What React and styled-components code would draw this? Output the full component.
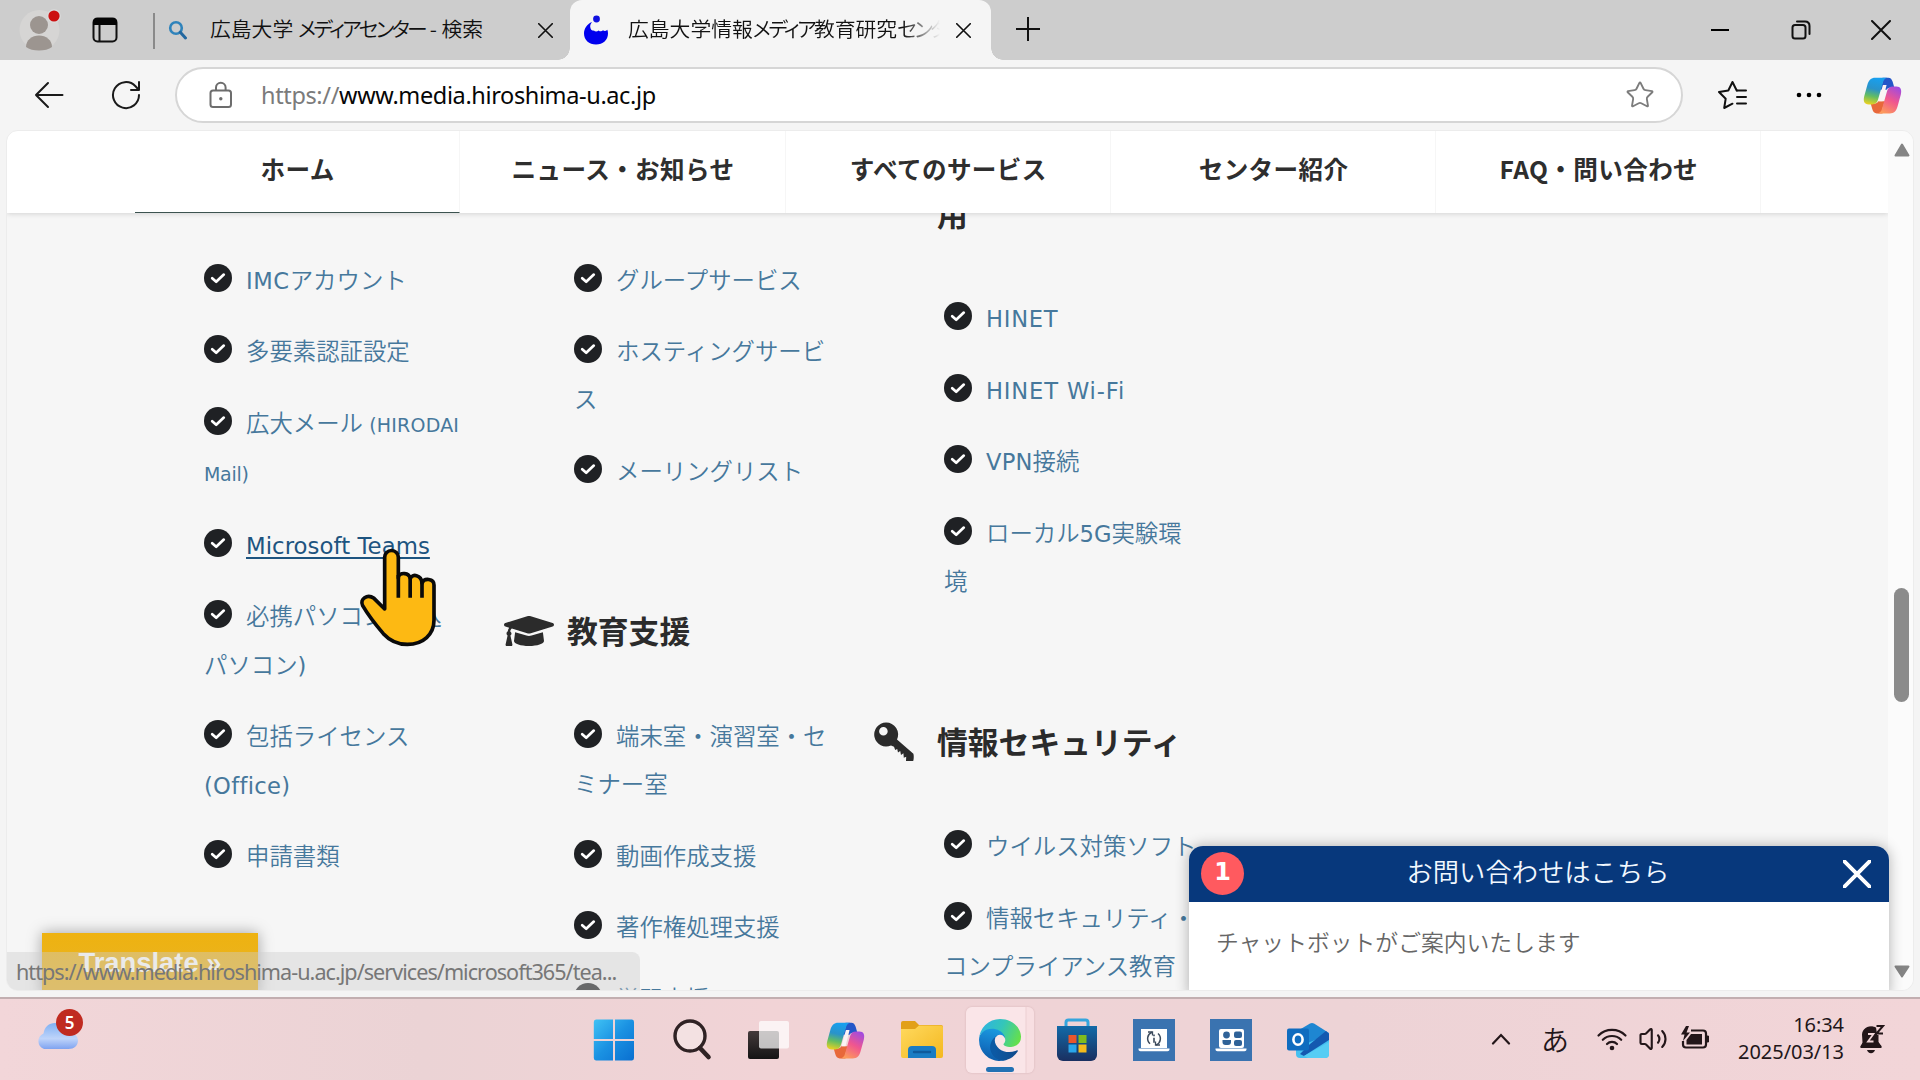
import React from "react";
import styled, { createGlobalStyle, css } from "styled-components";
import { FaGraduationCap } from "react-icons/fa";
import { Star, Volume2 } from "lucide-react";

const JP = `"Noto Sans CJK JP", sans-serif`;
const UI = `"Noto Sans", "Noto Sans CJK JP", sans-serif`;

const GlobalStyle = createGlobalStyle`
  *, *::before, *::after { box-sizing: border-box; }
  body { margin: 0; overflow: hidden; background: #f5f5f5; font-family: ${JP}; }
  svg { display: block; flex: none; }
  ul { list-style: none; margin: 0; padding: 0; }
`;

const Screen = styled.div`
  position: relative;
  width: 1920px;
  height: 1080px;
  overflow: hidden;
  display: flex;
  flex-direction: column;
`;

/* ---------- tab strip ---------- */
const TabStrip = styled.header`
  height: 60px;
  flex: none;
  display: flex;
  background: #cdcdcd;
  color: #111;
`;
const ProfileArea = styled.div`
  width: 153px;
  display: flex;
  align-items: center;
  padding: 0 0 0 18px;
  gap: 30px;
`;
const Divider = styled.i`
  width: 2px;
  height: 36px;
  margin: 13px 13px 0 0;
  background: #8a8a8a;
`;
const Tab = styled.div`
  display: flex;
  align-items: center;
  height: 60px;
  width: ${(p) => p.$w}px;
  padding-left: ${(p) => p.$pad}px;
  ${(p) =>
    p.$active &&
    css`
      position: relative;
      background: #f5f5f5;
      border-radius: 12px 12px 0 0;
      &::before,
      &::after {
        content: "";
        position: absolute;
        bottom: 0;
        width: 12px;
        height: 12px;
      }
      &::before {
        left: -12px;
        background: radial-gradient(circle at 0 0, #cdcdcd 11.5px, #f5f5f5 12px);
      }
      &::after {
        right: -12px;
        background: radial-gradient(circle at 100% 0, #cdcdcd 11.5px, #f5f5f5 12px);
      }
    `}
`;
const TabTitle = styled.span`
  width: ${(p) => p.$w}px;
  margin: 0 ${(p) => p.$mr}px 4px ${(p) => p.$ml}px;
  overflow: hidden;
  white-space: nowrap;
  font: 350 20.8px/30px ${JP};
  ${(p) => p.$fade && css`mask-image: linear-gradient(90deg, #000 88%, transparent);`}
`;
const Kana = styled.span`
  font-feature-settings: "palt";
  letter-spacing: ${(p) => p.$ls}px;
`;
const WindowButtons = styled.div`
  margin-left: auto;
  padding-right: 29px;
  display: flex;
  align-items: center;
  gap: 60.5px;
`;
const NewTab = styled.div`
  display: flex;
  align-items: center;
  padding: 0 0 2px 25px;
`;

/* ---------- toolbar ---------- */
const Toolbar = styled.div`
  height: 70px;
  flex: none;
  display: flex;
  align-items: center;
  padding: 0 18px 0 34px;
  background: #f5f5f5;
`;
const NavButtons = styled.div`
  width: 141px;
  display: flex;
  align-items: center;
  gap: 47px;
`;
const AddressBar = styled.div`
  width: 1508px;
  height: 56px;
  display: flex;
  align-items: center;
  padding: 0 26px 0 32px;
  border: 2px solid #d6d6d6;
  border-radius: 28px;
  background: #fff;
`;
const Url = styled.span`
  flex: 1;
  margin: 0 0 1px 28px;
  font: 400 23.5px/34px ${UI};
  letter-spacing: ${(p) => p.$ls}px;
  color: #060606;
  white-space: nowrap;
`;
const Scheme = styled.span`
  color: #7b7b7b;
`;
const ToolIcons = styled.div`
  margin-left: auto;
  display: flex;
  align-items: center;
`;
const Slot = styled.div`
  width: ${(p) => p.$w}px;
  flex: none;
  display: flex;
`;

/* ---------- page ---------- */
const Frame = styled.div`
  height: 867px;
  flex: none;
  padding: 0 6px 6px 6px;
  background: #f4f4f4;
`;
const Page = styled.main`
  position: relative;
  height: 861px;
  display: flex;
  overflow: hidden;
  border: 1px solid #ececec;
  border-radius: 12px;
  background: #f6f6f6;
`;
const Site = styled.div`
  width: 1881px;
  flex: none;
  display: flex;
  flex-direction: column;
  overflow: hidden;
`;
const SiteNav = styled.nav`
  position: relative;
  z-index: 1;
  height: 82px;
  flex: none;
  display: flex;
  padding-left: 128px;
  background: #fff;
  box-shadow: 0 1px 5px rgba(0, 0, 0, 0.14);
`;
const NavItem = styled.a`
  width: 325.3px;
  height: 82px;
  padding: 18px 0 0 1px;
  text-align: center;
  border-right: 1px solid #f6f6f6;
  border-bottom: ${(p) => (p.$active ? "1.5px solid #3c5350" : "none")};
  color: #2e2e2e;
  font: 700 24.6px/38px ${JP};
  letter-spacing: 0.35px;
`;
const Columns = styled.section`
  flex: 1;
  min-height: 0;
  display: flex;
  padding-left: 197px;
  overflow: hidden;
`;
const Column = styled.div`
  width: 370px;
  flex: none;
  padding-top: ${(p) => p.$top}px;
`;
const Heading = styled.h3`
  display: flex;
  align-items: center;
  height: 48px;
  margin: ${(p) => p.$mt}px 0 58px -70px;
  color: #2b2b2b;
  font: 700 30.8px/48px ${JP};
  white-space: nowrap;
`;
const HeadingIcon = styled.span`
  width: ${(p) => p.$w}px;
  padding-top: 2px;
  display: flex;
`;
const List = styled.ul`
  display: flex;
  flex-direction: column;
  gap: 23.3px;
`;
const Item = styled.li`
  display: flex;
  color: #46789c;
  font: 350 23.4px/48.3px ${JP};
  white-space: nowrap;
`;
const ItemIcon = styled.span`
  width: 42px;
  height: 43px;
  display: flex;
  align-items: center;
`;
const ItemText = styled.div`
  margin: -1.5px 0 1.5px;
`;
const Rest = styled.div`
  margin-left: -42px;
  ${(p) => p.$small && css`line-height: 50.6px;`}
`;
const Latin = styled.span`
  font-family: "DejaVu Sans", sans-serif;
  font-weight: 400;
  font-size: ${(p) => p.$size || 22.6}px;
  letter-spacing: ${(p) => p.$ls || 0}px;
  line-height: 0;
`;
const Hovered = styled.a`
  color: #1d5480;
  font-family: "DejaVu Sans", sans-serif;
  font-weight: 400;
  font-size: 22.8px;
  letter-spacing: 0.05px;
  line-height: 0;
  text-decoration: underline;
  text-decoration-thickness: 2px;
  text-underline-offset: 3px;
`;
const Scrollbar = styled.div`
  width: 25px;
  display: flex;
  flex-direction: column;
  align-items: center;
  padding: 12px 0 12px 2px;
  background: #fbfbfb;
`;
const Thumb = styled.div`
  width: 15px;
  height: 114px;
  margin: 431px 0 auto;
  border-radius: 8px;
  background: #8b8b8b;
`;

/* ---------- overlays ---------- */
const Translate = styled.button`
  position: absolute;
  left: 35px;
  top: 802px;
  width: 216px;
  height: 62px;
  padding: 0 0 2px;
  border: 0;
  background: linear-gradient(#eeb210, #e8b42a);
  box-shadow: 0 0 14px rgba(0, 0, 0, 0.35);
  color: #fff;
  font: 700 27.4px/58px "Liberation Sans", Arial, sans-serif;
`;
const StatusBubble = styled.div`
  position: absolute;
  left: 0;
  top: 821px;
  width: 633px;
  height: 40px;
  padding: 3px 0 0 9px;
  border-radius: 0 8px 0 0;
  background: rgba(205, 205, 205, 0.42);
  color: #777;
  font: 400 21.6px/34px ${UI};
  letter-spacing: ${(p) => p.$ls}px;
  white-space: nowrap;
`;
const Chat = styled.aside`
  position: absolute;
  z-index: 2;
  left: 1182px;
  top: 715px;
  width: 700px;
  height: 150px;
  border-radius: 14px 14px 0 0;
  background: #fff;
  box-shadow: 0 0 14px rgba(0, 0, 0, 0.3);
`;
const ChatHead = styled.div`
  height: 56px;
  display: flex;
  align-items: center;
  justify-content: space-between;
  padding: 0 18px 0 12px;
  border-radius: 14px 14px 0 0;
  background: #07387c;
  color: #f2f8ff;
  font: 350 26.3px/50px ${JP};
`;
const ChatTitle = styled.span`
  margin: -6px 11px 0 0;
`;
const Unread = styled.span`
  width: 43px;
  height: 43px;
  margin-top: -2px;
  border-radius: 50%;
  background: #ff5a5f;
  color: #fff;
  text-align: center;
  font: 700 24px/41px "DejaVu Sans", sans-serif;
`;
const ChatBody = styled.div`
  padding: 19px 0 0 27px;
  color: #666;
  font: 350 22.8px/42px ${JP};
`;
const Pointer = styled.svg`
  position: absolute;
  z-index: 3;
  left: 358px;
  top: 547px;
`;

/* ---------- taskbar ---------- */
const Taskbar = styled.footer`
  position: relative;
  flex: 1;
  display: flex;
  border-top: 2px solid #c2aeb0;
  background: linear-gradient(90deg, #f2d6d9, #ebd3d5 22%, #f1d3d6 40%, #edd3d6 70%, #f2d5d8);
  color: #231619;
`;
const Weather = styled.div`
  position: relative;
  width: 575px;
  flex: none;
  padding: 21px 0 0 34px;
`;
const WeatherBadge = styled.span`
  position: absolute;
  left: 56px;
  top: 10px;
  width: 27px;
  height: 27px;
  border-radius: 50%;
  background: #c02a20;
  color: #fff;
  text-align: center;
  font: 600 17px/27px ${UI};
`;
const Apps = styled.div`
  display: flex;
  align-items: center;
  padding-bottom: 4px;
`;
const App_ = styled.div`
  width: 77.2px;
  height: 82px;
  display: flex;
  align-items: center;
  justify-content: center;
`;
const ActiveApp = styled.div`
  width: 68px;
  height: 66px;
  display: flex;
  flex-direction: column;
  align-items: center;
  padding-top: 12px;
  gap: 6px;
  border-radius: 6px;
  background: linear-gradient(90deg, #fae5e8 59px, #eccfd2 60px, #f8dfe2 61px);
  box-shadow: 0 0 2px rgba(140, 90, 95, 0.3);
  &::after {
    content: "";
    width: 28px;
    height: 5px;
    border-radius: 3px;
    background: #2272b4;
  }
`;
const Tray = styled.div`
  margin-left: auto;
  padding: 0 35px 6px 0;
  display: flex;
  align-items: center;
`;
const Ime = styled.span`
  width: 85px;
  flex: none;
  padding-left: 30px;
  font: 350 28px/38px ${JP};
`;
const Clock = styled.div`
  width: 149px;
  padding: 0 15px 2px 0;
  text-align: right;
  font: 400 20px/27.500px ${UI};
  letter-spacing: -0.05px;
`;

const CheckIcon = () => (
  <svg width="28" height="28" viewBox="0 0 28 28">
    <circle cx="14" cy="14" r="14" fill="#1f2124" />
    <path d="M8.2 14.2l4 3.6 7.6-7.2" fill="none" stroke="#fff" strokeWidth="2.7" strokeLinecap="round" strokeLinejoin="round" />
  </svg>
);

const KeyIcon = () => (
  <svg width="40" height="40" viewBox="0 0 40 40">
    <path
      fillRule="evenodd"
      fill="#2b2b2b"
      d="M12 0.5a12 12 0 1 0 5 23l3 1.2 1.2 3.2 2-1 .8 3.6 2.2-1.4.8 4 2.4-1.8.4 4.4 2.4-1-.2 4.4h7.2c.6-2 .8-5 .2-7.4L23 17.6A12 12 0 0 0 12 .5zM9.4 5a4.3 4.3 0 1 1 0 8.6 4.3 4.3 0 0 1 0-8.6z"
    />
  </svg>
);

const Cross = ({ size, stroke = 2, color = "#111" }) => (
  <svg width={size} height={size} viewBox="0 0 20 20">
    <path d="M1 1l18 18M19 1L1 19" stroke={color} strokeWidth={stroke} strokeLinecap="round" />
  </svg>
);

const CopilotIcon = ({ size, id }) => (
  <svg width={size} height={size} viewBox="0 0 48 48">
    <defs>
      <linearGradient id={id + "a"} x1="0.4" y1="0" x2="0.2" y2="1">
        <stop offset="0" stopColor="#189fee" />
        <stop offset="0.4" stopColor="#2a93c9" />
        <stop offset="0.68" stopColor="#63bd62" />
        <stop offset="1" stopColor="#eed21f" />
      </linearGradient>
      <linearGradient id={id + "b"} x1="0.8" y1="0" x2="0.3" y2="1">
        <stop offset="0" stopColor="#a04be0" />
        <stop offset="0.5" stopColor="#f0568f" />
        <stop offset="1" stopColor="#fd9a5b" />
      </linearGradient>
    </defs>
    <path d="M24 2h7c3 0 4.600 2 5.500 5l2 7h-3.500c-3 0-5 1-6 3L21 17l3-9z" fill="#2456c8" />
    <path d="M24 46h-7c-3 0-4.600-2-5.500-5l-2-7h3.500c3 0 5-1 6-3l8 0-3 9z" fill="#e8683a" />
    <path d="M19.500 29l5-18h4.500l-5 20h-4.500z" fill="#fbf3f4" />
    <path d="M15 2h15c-3 .5-4.500 2.500-5.500 6l-6 21c-1 4-3.500 6-7.500 6H7C1.500 35 0 31 1.500 25L5.500 10.500C7 5 10 2 15 2z" fill={`url(#${id}a)`} />
    <path d="M33 46H18c3-.5 4.500-2.500 5.500-6l6-21c1-4 3.500-6 7.500-6h4c5.500 0 7 4 5.500 10l-4 14.500C41 43 38 46 33 46z" fill={`url(#${id}b)`} />
  </svg>
);

const EdgeIcon = () => (
  <svg width="42" height="42" viewBox="0 0 256 256">
    <defs>
      <linearGradient id="e1" x1="0.2" y1="0.7" x2="1" y2="0.7">
        <stop offset="0" stopColor="#0c59a4" />
        <stop offset="1" stopColor="#114a8b" />
      </linearGradient>
      <linearGradient id="e2" x1="0.6" y1="0" x2="0.4" y2="1">
        <stop offset="0" stopColor="#1b9de2" />
        <stop offset="0.6" stopColor="#1374c4" />
        <stop offset="1" stopColor="#0c5aa6" />
      </linearGradient>
      <linearGradient id="e3" x1="0" y1="0.3" x2="1" y2="0.6">
        <stop offset="0" stopColor="#2fb3e2" />
        <stop offset="0.5" stopColor="#34c6b9" />
        <stop offset="1" stopColor="#66e04a" />
      </linearGradient>
    </defs>
    <path fill="url(#e1)" d="M231.070 190.550a93.310 93.310 0 0 1-10.540 4.710 101.890 101.890 0 0 1-35.900 6.460c-47.320 0-88.540-32.550-88.540-74.320A31.500 31.500 0 0 1 112.540 100c-42.800 1.800-53.800 46.400-53.800 72.530 0 73.890 68.100 81.380 82.770 81.380 7.910 0 19.840-2.300 27-4.560l1.310-.44a128.340 128.340 0 0 0 66.600-52.800 4 4 0 0 0-5.350-5.560z" />
    <path fill="url(#e2)" d="M105.730 241.420a79.200 79.200 0 0 1-22.740-21.340 80.720 80.720 0 0 1 29.530-120c3.120-1.470 8.450-4.130 15.540-4a32.350 32.350 0 0 1 25.690 13 31.880 31.880 0 0 1 6.360 18.660c0-.21 24.460-79.600-80-79.600-43.900 0-80 41.660-80 78.210a130.150 130.150 0 0 0 12.110 56 128 128 0 0 0 156.380 67.110 75.550 75.550 0 0 1-62.870-8z" />
    <path fill="url(#e3)" d="M152.330 148.860c-.81 1.050-3.300 2.500-3.300 5.660 0 2.610 1.700 5.120 4.720 7.230 14.380 10 41.490 8.680 41.560 8.680a59.560 59.560 0 0 0 30.270-8.350A61.380 61.380 0 0 0 256 109.180c.26-22.410-8-37.310-11.340-43.910C223.460 23.840 177.720 0 128 0A128 128 0 0 0 0 126.200c.48-36.540 36.800-66.050 80-66.050 3.500 0 23.460.34 42 10.070 16.340 8.580 24.900 18.940 30.850 29.210 6.180 10.670 7.280 24.150 7.280 29.520s-2.740 13.330-7.800 19.910z" />
  </svg>
);

const Bullet = ({ children }) => (
  <Item>
    <ItemIcon><CheckIcon /></ItemIcon>
    <ItemText>{children}</ItemText>
  </Item>
);

const Laptop = ({ children }) => (
  <svg width="42" height="42" viewBox="0 0 42 42">
    <rect width="42" height="42" fill="#3a73b0" />
    {children}
    <path d="M5.500 29.500h31v.8c0 1.200-.8 2-2 2h-27c-1.200 0-2-.8-2-2z" fill="#fff" />
  </svg>
);

export default function App() {
  return (
    <Screen>
      <GlobalStyle />
      <TabStrip>
        <ProfileArea>
          <svg width="44" height="44" viewBox="0 0 44 44">
            <circle cx="21.500" cy="22" r="20" fill="#d6d5d4" />
            <circle cx="21" cy="17" r="9" fill="#9c9590" />
            <path d="M8 39c0-7 6-11.500 13-11.500S34 32 34 39c-3 2.500-8 3.500-13 3.500S11 41.500 8 39z" fill="#9c9590" />
            <circle cx="36" cy="8" r="6.800" fill="#dcdcdc" />
            <circle cx="36" cy="8" r="5.600" fill="#cc1111" />
          </svg>
          <svg width="26" height="26" viewBox="0 0 26 26">
            <rect x="1.500" y="1.500" width="23" height="23" rx="4" fill="none" stroke="#111" strokeWidth="2" />
            <path d="M1 8V5a4 4 0 0 1 4-4h16a4 4 0 0 1 4 4v3z" fill="#050505" />
            <path d="M7.500 8v16" stroke="#111" strokeWidth="2" />
          </svg>
        </ProfileArea>
        <Divider />
        <Tab $w={402} $pad={0}>
          <svg width="20" height="20" viewBox="0 0 20 20">
            <circle cx="8" cy="8" r="5.800" fill="none" stroke="#2f83bb" strokeWidth="2.600" />
            <path d="M12.300 12.300L17.500 18" stroke="#2368a0" strokeWidth="3" strokeLinecap="round" />
          </svg>
          <TabTitle $w={290} $ml={22} $mr={38}>
            広島大学 <Kana $ls={-2.6}>メディアセンター</Kana> - 検索
          </TabTitle>
          <Cross size={15} stroke={2.2} />
        </Tab>
        <Tab $active $w={421} $pad={14}>
          <svg width="24" height="30" viewBox="0 0 24 30">
            <circle cx="12.500" cy="4" r="3.400" fill="#1010e0" />
            <path d="M8 7C3 9 0 13.500 0 18.500 0 25 5 29.500 12 29.500S24 25 24 18.500c0-1.300-.2-2.600-.7-3.800-1.500 1.600-3 1.600-4.300.6-1.200 1.400-3 1.400-4.400.1-1.500 1.500-3.600 1.300-4.700.2C7.500 16 6.300 14 6.200 11.500 6.200 10 6.800 8.500 8 7z" fill="#0000ee" />
          </svg>
          <TabTitle $fade $w={312} $ml={20} $mr={16}>
            広島大学情報<Kana $ls={-2.6}>メディア</Kana>教育研究<Kana $ls={-2.6}>センター</Kana>
          </TabTitle>
          <Cross size={15} stroke={2.2} />
        </Tab>
        <NewTab>
          <svg width="24" height="24" viewBox="0 0 24 24">
            <path d="M12 0v24M0 12h24" stroke="#111" strokeWidth="2" />
          </svg>
        </NewTab>
        <WindowButtons>
          <svg width="20" height="20" viewBox="0 0 20 20">
            <path d="M1 10h18" stroke="#000" strokeWidth="2" />
          </svg>
          <svg width="20" height="20" viewBox="0 0 20 20">
            <rect x="1.500" y="5" width="13" height="13.500" rx="2.500" fill="none" stroke="#111" strokeWidth="2" />
            <path d="M6 1.500h8c3 0 4.500 1.500 4.500 4.500v8" fill="none" stroke="#111" strokeWidth="2" strokeLinecap="round" />
          </svg>
          <Cross size={20} stroke={2} />
        </WindowButtons>
      </TabStrip>

      <Toolbar>
        <NavButtons>
          <svg width="30" height="28" viewBox="0 0 30 28">
            <path d="M28.500 14H2M14 2L2 14l12 12" fill="none" stroke="#1a1a1a" strokeWidth="2" strokeLinecap="round" strokeLinejoin="round" />
          </svg>
          <svg width="30" height="30" viewBox="0 0 30 30">
            <path d="M28 15A13 13 0 1 1 24.500 6.200L27.500 9.500M28 2v8h-8" fill="none" stroke="#1a1a1a" strokeWidth="2" strokeLinecap="round" strokeLinejoin="round" />
          </svg>
        </NavButtons>
        <AddressBar>
          <svg width="24" height="28" viewBox="0 0 24 28">
            <rect x="1.500" y="9.500" width="20.500" height="16.500" rx="2.500" fill="none" stroke="#6d6d6d" strokeWidth="2" />
            <path d="M7 9.500V6.500a4.800 4.800 0 0 1 9.600 0v3" fill="none" stroke="#6d6d6d" strokeWidth="2" />
            <circle cx="11.800" cy="17.700" r="1.700" fill="#6d6d6d" />
          </svg>
          <Url $ls={-0.37}><Scheme>https://</Scheme>www.media.hiroshima-u.ac.jp</Url>
          <Star size={30} strokeWidth={1.500} color="#7c7c7c" />
        </AddressBar>
        <ToolIcons>
          <Slot $w={79}>
            <svg width="32" height="30" viewBox="0 0 32 30">
              <path d="M20 10.500h-.3L15.500 2 11.300 10.500 2 12l6.700 6.700L7.200 28l8.300-4.300" fill="none" stroke="#111" strokeWidth="2" strokeLinejoin="round" strokeLinecap="round" />
              <path d="M20 10.500h9M20 17h9M20 23.500h9" stroke="#111" strokeWidth="2" strokeLinecap="round" />
            </svg>
          </Slot>
          <Slot $w={67}>
            <svg width="26" height="6" viewBox="0 0 26 6">
              <circle cx="3" cy="3" r="2.300" /><circle cx="13" cy="3" r="2.300" /><circle cx="23" cy="3" r="2.300" />
            </svg>
          </Slot>
          <CopilotIcon size={39} id="ct" />
        </ToolIcons>
      </Toolbar>

      <Frame>
        <Page>
          <Site>
            <SiteNav>
              <NavItem $active>ホーム</NavItem>
              <NavItem>ニュース・お知らせ</NavItem>
              <NavItem>すべてのサービス</NavItem>
              <NavItem>センター紹介</NavItem>
              <NavItem>FAQ・問い合わせ</NavItem>
            </SiteNav>
            <Columns>
              <Column $top={43}>
                <List>
                  <Bullet><Latin $ls={0.6}>IMC</Latin>アカウント</Bullet>
                  <Bullet>多要素認証設定</Bullet>
                  <Bullet>
                    広大メール<Latin $size={19} $ls={0.2}> (HIRODAI</Latin>
                    <Rest $small><Latin $size={19} $ls={-0.3}>Mail)</Latin></Rest>
                  </Bullet>
                  <Bullet><Hovered>Microsoft Teams</Hovered></Bullet>
                  <Bullet>
                    必携パソコン<Latin>(</Latin>持込
                    <Rest>パソコン<Latin>)</Latin></Rest>
                  </Bullet>
                  <Bullet>
                    包括ライセンス
                    <Rest><Latin $ls={0.3}>(Office)</Latin></Rest>
                  </Bullet>
                  <Bullet>申請書類</Bullet>
                </List>
              </Column>
              <Column $top={43}>
                <List>
                  <Bullet>グループサービス</Bullet>
                  <Bullet>
                    ホスティングサービ
                    <Rest>ス</Rest>
                  </Bullet>
                  <Bullet>メーリングリスト</Bullet>
                </List>
                <Heading $mt={110.5}>
                  <HeadingIcon $w={63}><FaGraduationCap size={50} /></HeadingIcon>
                  教育支援
                </Heading>
                <List>
                  <Bullet>
                    端末室・演習室・セ
                    <Rest>ミナー室</Rest>
                  </Bullet>
                  <Bullet>動画作成支援</Bullet>
                  <Bullet>著作権処理支援</Bullet>
                  <Bullet>学習支援</Bullet>
                </List>
              </Column>
              <Column $top={0}>
                <Heading $mt={-24.5}>
                  <HeadingIcon $w={63} />
                  用
                </Heading>
                <List>
                  <Bullet><Latin $ls={0.75}>HINET</Latin></Bullet>
                  <Bullet><Latin $ls={0.85}>HINET Wi-Fi</Latin></Bullet>
                  <Bullet><Latin $ls={0.2}>VPN</Latin>接続</Bullet>
                  <Bullet>
                    ローカル<Latin>5G</Latin>実験環
                    <Rest>境</Rest>
                  </Bullet>
                </List>
                <Heading $mt={111}>
                  <HeadingIcon $w={63}><KeyIcon /></HeadingIcon>
                  情報セキュリティ
                </Heading>
                <List>
                  <Bullet>ウイルス対策ソフト</Bullet>
                  <Bullet>
                    情報セキュリティ・
                    <Rest>コンプライアンス教育</Rest>
                  </Bullet>
                </List>
              </Column>
            </Columns>
          </Site>
          <Scrollbar>
            <svg width="16" height="14" viewBox="0 0 16 14">
              <path d="M8 1.500L14.500 12.500H1.500z" fill="#858585" stroke="#858585" strokeWidth="2" strokeLinejoin="round" />
            </svg>
            <Thumb />
            <svg width="16" height="13" viewBox="0 0 16 13">
              <path d="M8 11.500L14.500 1.500H1.500z" fill="#858585" stroke="#858585" strokeWidth="2" strokeLinejoin="round" />
            </svg>
          </Scrollbar>
          <Translate>Translate »</Translate>
          <StatusBubble $ls={-0.97}>https://www.media.hiroshima-u.ac.jp/services/microsoft365/tea...</StatusBubble>
          <Chat>
            <ChatHead>
              <Unread>1</Unread>
              <ChatTitle>お問い合わせはこちら</ChatTitle>
              <Cross size={28} stroke={2.800} color="#fff" />
            </ChatHead>
            <ChatBody>チャットボットがご案内いたします</ChatBody>
          </Chat>
        </Page>
      </Frame>

      <Taskbar>
        <Weather>
          <svg width="46" height="30" viewBox="0 0 46 30">
            <defs>
              <linearGradient id="cl" x1="0" y1="0" x2="0" y2="1">
                <stop offset="0" stopColor="#7fb0f3" /><stop offset="0.6" stopColor="#bfd4fa" /><stop offset="1" stopColor="#7fa3f0" />
              </linearGradient>
            </defs>
            <path d="M10 29a9 8.500 0 0 1-.5-15.500C10.500 7 15 3 21 3s10.500 4 11.500 9.500C39 12 44 15.500 44 20.500S40 29 34.500 29z" fill="url(#cl)" />
          </svg>
          <WeatherBadge>5</WeatherBadge>
        </Weather>
        <Apps>
          <App_>
            <svg width="42" height="42" viewBox="0 0 42 42">
              <defs>
                <linearGradient id="wn" x1="0" y1="0" x2="1" y2="1"><stop offset="0" stopColor="#3fc2f5" /><stop offset="0.5" stopColor="#1a91e2" /><stop offset="1" stopColor="#0a6fd0" /></linearGradient>
              </defs>
              <path d="M3 .5h17v19.500H.8V3A2.500 2.500 0 0 1 3 .5zM22 .5h17A2.500 2.500 0 0 1 41 3v17H22zM.8 22H20v19.500H3A2.500 2.500 0 0 1 .8 39zM22 22h19v17a2.500 2.500 0 0 1-2 2.500H22z" fill="url(#wn)" />
            </svg>
          </App_>
          <App_>
            <svg width="42" height="42" viewBox="0 0 42 42">
              <circle cx="20" cy="17" r="15" fill="#f3e1e2" stroke="#2f2224" strokeWidth="3.400" />
              <path d="M30 29l8.500 9" stroke="#2f2224" strokeWidth="4.600" strokeLinecap="round" />
            </svg>
          </App_>
          <App_>
            <svg width="44" height="40" viewBox="0 0 44 40">
              <defs>
                <linearGradient id="tv" x1="0" y1="0" x2="0" y2="1"><stop offset="0" stopColor="#443a3b" /><stop offset="1" stopColor="#151314" /></linearGradient>
              </defs>
              <rect x="2" y="11" width="31" height="28" rx="2" fill="url(#tv)" />
              <rect x="13" y="1" width="30" height="27.500" rx="2" fill="#fff" fillOpacity="0.720" />
            </svg>
          </App_>
          <App_><CopilotIcon size={39} id="cb" /></App_>
          <App_>
            <svg width="44" height="40" viewBox="0 0 44 40">
              <defs>
                <linearGradient id="fd" x1="0" y1="0" x2="1" y2="1"><stop offset="0" stopColor="#ffd95e" /><stop offset="1" stopColor="#f4b820" /></linearGradient>
              </defs>
              <path d="M1 3a2 2 0 0 1 2-2h12l4 4h22a2 2 0 0 1 2 2v6H1z" fill="#e2a019" />
              <path d="M1 9h14l4-3.500h22a2 2 0 0 1 2 2V36a2 2 0 0 1-2 2H3a2 2 0 0 1-2-2z" fill="url(#fd)" />
              <path d="M8 38V30a4 4 0 0 1 4-4h20a4 4 0 0 1 4 4v8z" fill="#1a7cc4" />
              <path d="M14 32h16" stroke="#0f5a9c" strokeWidth="2.400" strokeLinecap="round" />
            </svg>
          </App_>
          <App_><ActiveApp><EdgeIcon /></ActiveApp></App_>
          <App_>
            <svg width="42" height="44" viewBox="0 0 42 44">
              <defs>
                <linearGradient id="st" x1="0" y1="0" x2="0" y2="1"><stop offset="0" stopColor="#126aa8" /><stop offset="1" stopColor="#1a2f60" /></linearGradient>
              </defs>
              <path d="M10 9V4.500A2.500 2.500 0 0 1 12.500 2h17A2.500 2.500 0 0 1 32 4.500V9" fill="none" stroke="#35a5dd" strokeWidth="3" />
              <path d="M1 8h40v29a6 6 0 0 1-6 6H7a6 6 0 0 1-6-6z" fill="url(#st)" />
              <path d="M12.500 17h8v8h-8z" fill="#e8562c" /><path d="M22.500 17h8v8h-8z" fill="#80bc1e" />
              <path d="M12.500 26.500h8v8h-8z" fill="#2aa6ea" /><path d="M22.500 26.500h8v8h-8z" fill="#f5bb1c" />
            </svg>
          </App_>
          <App_>
            <Laptop>
              <rect x="8" y="10" width="26" height="19" fill="#fff" />
              <path d="M19 13.200a6.800 6.800 0 0 0-2 11.500M23 26a6.800 6.800 0 0 0 2-11.500" fill="none" stroke="#3b4a5c" strokeWidth="1.500" />
              <path d="M15 13h4.500v3.500M27 26h-4.500v-3.500" fill="none" stroke="#3b4a5c" strokeWidth="1.300" />
              <path d="M21 15.500v1.800M21 18.800v5" stroke="#3b4a5c" strokeWidth="1.600" />
            </Laptop>
          </App_>
          <App_>
            <Laptop>
              <rect x="9" y="10" width="25" height="19" rx="2" fill="#fff" />
              <path d="M12.500 21h8.500v2a3 3 0 0 1-3 3h-2.500a3 3 0 0 1-3-3z" fill="#2f6298" />
              <circle cx="16.500" cy="16" r="3.400" fill="#2f6298" />
              <rect x="24" y="12.500" width="8" height="6.500" rx="2" fill="#2f6298" />
              <rect x="24" y="21" width="8" height="6" rx="2" fill="#2f6298" />
            </Laptop>
          </App_>
          <App_>
            <svg width="44" height="40" viewBox="0 0 44 40">
              <path d="M8 13L24 3.500a4 4 0 0 1 4 0L43 13v8L20 33 8 28z" fill="#1e86d2" />
              <path d="M43 14v20a4 4 0 0 1-4 4H14a4 4 0 0 1-4-4V28z" fill="#45c0f0" />
              <path d="M24 24l16-13 3 3v6L18 36l-4-2z" fill="#1459b0" />
              <path d="M18 36l25-14v12a4 4 0 0 1-4 4H22z" fill="#56cdf4" />
              <rect x="1" y="8.500" width="22" height="22" rx="2" fill="#0f6cbf" />
              <ellipse cx="12" cy="19.500" rx="4.600" ry="5.300" fill="none" stroke="#fff" strokeWidth="2.600" />
            </svg>
          </App_>
        </Apps>
        <Tray>
          <svg width="20" height="12" viewBox="0 0 20 12">
            <path d="M2 10.500L10 2l8 8.500" fill="none" stroke="#231619" strokeWidth="2.200" strokeLinecap="round" />
          </svg>
          <Ime>あ</Ime>
          <Slot $w={42}><svg width="32" height="26" viewBox="0 0 32 26"><g fill="none" stroke="#231619" strokeWidth="2.200" strokeLinecap="round"><path d="M2.500 9.500a19 19 0 0 1 27 0M6.800 13.800a13 13 0 0 1 18.400 0M11 18a7 7 0 0 1 10 0" /></g><circle cx="16" cy="22" r="2.300" fill="#231619" /></svg></Slot>
          <Slot $w={42}><Volume2 size={30} strokeWidth={1.700} color="#231619" /></Slot>
          <Slot $w={30}>
            <svg width="30" height="26" viewBox="0 0 30 26">
              <path d="M11 4.500h12a3 3 0 0 1 3 3v11a3 3 0 0 1-3 3H6a3 3 0 0 1-3-3V15" fill="none" stroke="#231619" strokeWidth="2.200" />
              <path d="M11 8h11v10.500H6.500V14z" fill="#231619" />
              <path d="M27 10h1.500v6H27z" fill="#231619" stroke="#231619" />
              <path d="M6 0L1 8.500h3.500L3 15l7-8.500H6.500L9 0z" fill="#231619" />
            </svg>
          </Slot>
          <Clock>16:34<br />2025/03/13</Clock>
          <svg width="26" height="30" viewBox="0 0 26 30">
            <path d="M17 3.500A8 8 0 0 0 5 10v8l-3.500 4v2h21v-2L19 18v-2" fill="#231619" />
            <path d="M3 10.500A8.500 8.500 0 0 1 14 2.800V11h5.500v7l3 5H1.500l2-4.500z" fill="#231619" />
            <path d="M8 26h8c-.5 2-2 3.200-4 3.200S8.500 28 8 26z" fill="#231619" />
            <path d="M9 10h5.500L9 17.500h5.500" fill="none" stroke="#f1d5d8" strokeWidth="1.800" />
            <path d="M17.500 2H24l-6.500 7.500H24" fill="none" stroke="#231619" strokeWidth="2" />
          </svg>
        </Tray>
      </Taskbar>

      <Pointer width="80" height="102" viewBox="-6 -4 240 306">
        <path
          d="M115 90V27a20.500 20.500 0 0 0-41 0V182L42 150C22 136-2 152 8 172C22 196 46 228 70 256C90 278 112 288 142 288C190 288 222 258 222 215V110C222 90 192 88 186 104C184 78 156 76 151 90C146 72 122 72 115 84z"
          fill="#fdb913"
          stroke="#0a0a0a"
          strokeWidth="11"
          strokeLinejoin="round"
        />
        <path d="M115 80v68M150.500 88v60M186 100v48" fill="none" stroke="#0a0a0a" strokeWidth="11" />
      </Pointer>
    </Screen>
  );
}
